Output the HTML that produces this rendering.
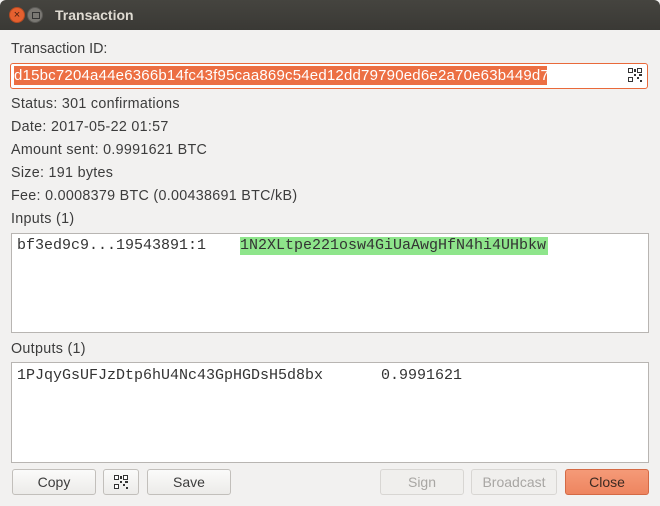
<!DOCTYPE html>
<html><head><style>
body{margin:0;width:660px;height:506px;background:#f2f1f0;font-family:"Liberation Sans",sans-serif;font-size:14.3px;color:#3c3c3c;position:relative;overflow:hidden}
.tb{position:absolute;left:0;top:0;width:660px;height:30px;background:linear-gradient(#45443f,#3a3935);border-radius:6px 6px 0 0}
.tb .t{position:absolute;left:55px;top:7px;color:#dfdbd2;font-weight:bold;font-size:14px}
.c{position:absolute;border-radius:50%;width:16px;height:16px;top:7px}
.a{position:absolute;left:11px;white-space:nowrap;line-height:16px;height:16px}
.box{position:absolute;left:11px;width:636px;background:#fff;border:1px solid #b8b5b2}
.mono{font-family:"Liberation Mono",monospace;font-size:15px;color:#333;position:absolute;white-space:pre;line-height:18px}
.btn{position:absolute;top:469px;height:24px;border:1px solid #c2bfbb;border-radius:3px;background:linear-gradient(#fbfbfa,#ecebe9);text-align:center;line-height:24px;font-size:14px;color:#3c3c3c}
.dis{color:#a8a6a3;border-color:#d8d6d3;background:#f0efed}
</style></head><body>
<div class="tb">
<div class="c" style="left:9px;background:#e5602f;border:1px solid #b54a22;box-sizing:border-box;color:#4a2010;font-size:11px;text-align:center;line-height:14px">×</div>
<div class="c" style="left:27px;background:#7a7873;border:1px solid #5b5a56;box-sizing:border-box"><div style="width:6px;height:5px;border:1px solid #333;margin:4px 0 0 4px"></div></div>
<div class="t">Transaction</div>
</div>
<div class="a" style="top:41px">Transaction ID:</div>
<div style="position:absolute;left:10px;top:63px;width:636px;height:24px;border:1px solid #e9693a;border-radius:3px;background:#fff"></div>
<div style="position:absolute;left:14px;top:66px;width:533px;height:19px;background:#ec6f43;color:#fff;font-size:15px;letter-spacing:0.2px;line-height:19px;white-space:nowrap;overflow:hidden">d15bc7204a44e6366b14fc43f95caa869c54ed12dd79790ed6e2a70e63b449d7</div>
<svg style="position:absolute;left:628px;top:68px" width="14" height="14" viewBox="0 0 14 14"><g fill="#333"><rect x="0" y="0" width="5" height="5"/><rect x="9" y="0" width="5" height="5"/><rect x="0" y="9" width="5" height="5"/><rect x="6" y="6" width="2" height="2"/><rect x="9" y="9" width="2" height="2"/><rect x="12" y="12" width="2" height="2"/><rect x="6" y="1" width="2" height="3"/><rect x="11" y="6" width="3" height="2"/></g><g fill="#fff"><rect x="1" y="1" width="3" height="3"/><rect x="10" y="1" width="3" height="3"/><rect x="1" y="10" width="3" height="3"/></g></svg>
<div class="a" style="top:96px;letter-spacing:0.3px">Status: 301 confirmations</div>
<div class="a" style="top:119px;letter-spacing:0.3px">Date: 2017-05-22 01:57</div>
<div class="a" style="top:142px;letter-spacing:0.3px">Amount sent: 0.9991621 BTC</div>
<div class="a" style="top:165px;letter-spacing:0.3px">Size: 191 bytes</div>
<div class="a" style="top:188px;letter-spacing:0.3px">Fee: 0.0008379 BTC (0.00438691 BTC/kB)</div>
<div class="a" style="top:211px;letter-spacing:0.3px">Inputs (1)</div>
<div class="box" style="top:233px;height:98px"></div>
<div class="mono" style="left:17px;top:237px">bf3ed9c9...19543891:1</div>
<div class="mono" style="left:240px;top:237px;background:#8ee58b;width:308px;overflow:hidden">1N2XLtpe221osw4GiUaAwgHfN4hi4UHbkw</div>
<div class="a" style="top:341px;letter-spacing:0.3px">Outputs (1)</div>
<div class="box" style="top:362px;height:99px"></div>
<div class="mono" style="left:17px;top:367px">1PJqyGsUFJzDtp6hU4Nc43GpHGDsH5d8bx</div>
<div class="mono" style="left:381px;top:367px">0.9991621</div>
<div class="btn" style="left:12px;width:82px">Copy</div>
<div class="btn" style="left:103px;width:34px"><svg style="margin-top:5px" width="14" height="14" viewBox="0 0 14 14"><g fill="#333"><rect x="0" y="0" width="5" height="5"/><rect x="9" y="0" width="5" height="5"/><rect x="0" y="9" width="5" height="5"/><rect x="6" y="6" width="2" height="2"/><rect x="9" y="9" width="2" height="2"/><rect x="12" y="12" width="2" height="2"/><rect x="6" y="1" width="2" height="3"/><rect x="11" y="6" width="3" height="2"/></g><g fill="#fff"><rect x="1" y="1" width="3" height="3"/><rect x="10" y="1" width="3" height="3"/><rect x="1" y="10" width="3" height="3"/></g></svg></div>
<div class="btn" style="left:147px;width:82px">Save</div>
<div class="btn dis" style="left:380px;width:82px">Sign</div>
<div class="btn dis" style="left:471px;width:84px">Broadcast</div>
<div class="btn" style="left:565px;width:82px;background:linear-gradient(#f59a78,#ee8560);border-color:#d46a45;color:#3c2a22">Close</div>
</body></html>
